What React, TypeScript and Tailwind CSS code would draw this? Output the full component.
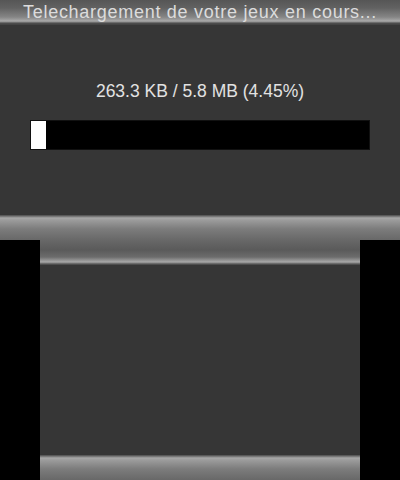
import React from 'react';

const barTop = 'bg-[linear-gradient(to_bottom,#565656_0px,#626262_8px,#858585_17px,#a9a9a9_21px,#8a8a8a_22px,#505050_23px,#404040_25px)]';
const barBottom = 'bg-[linear-gradient(to_bottom,#4a4a4a_0px,#a8a8a8_3px,#9c9c9c_5px,#7c7c7c_14px,#686868_25px)]';
const barTopLow = 'bg-[linear-gradient(to_bottom,#686868_0px,#5a5a5a_10px,#6c6c6c_17px,#a9a9a9_22px,#585858_24px,#444444_25px)]';

export default function App() {
  const done = 263.3;
  const total = 5.8 * 1024;
  const pct = (done / total) * 100;

  return (
    <div className="w-[400px] h-[480px] flex flex-col bg-black font-['Liberation_Sans',Arial,sans-serif]">
      {/* top screen */}
      <div className="h-[240px] flex flex-col bg-[#363636]">
        <div className={`h-[25px] flex items-start justify-center ${barTop}`}>
          <span className="text-[18px] leading-[24px] text-[#dcdcdc] tracking-[0.72px]">
            Telechargement de votre jeux en cours...
          </span>
        </div>
        <div className="flex-1 flex flex-col items-center">
          <p className="mt-[55px] text-[17.5px] leading-[22px] text-[#e2e2e2]">
            263.3 KB / 5.8 MB (4.45%)
          </p>
          <div className="mt-[18px] w-[340px] h-[30px] bg-black border border-[#111]">
            <div className="h-full bg-white" style={{ width: `${pct}%` }} />
          </div>
        </div>
        <div className={`h-[25px] ${barBottom}`} />
      </div>

      {/* bottom screen */}
      <div className="h-[240px] flex">
        <div className="w-[40px] bg-black" />
        <div className="w-[320px] flex flex-col bg-[#363636]">
          <div className={`h-[25px] ${barTopLow}`} />
          <div className="flex-1" />
          <div className={`h-[25px] ${barBottom}`} />
        </div>
        <div className="w-[40px] bg-black" />
      </div>
    </div>
  );
}
